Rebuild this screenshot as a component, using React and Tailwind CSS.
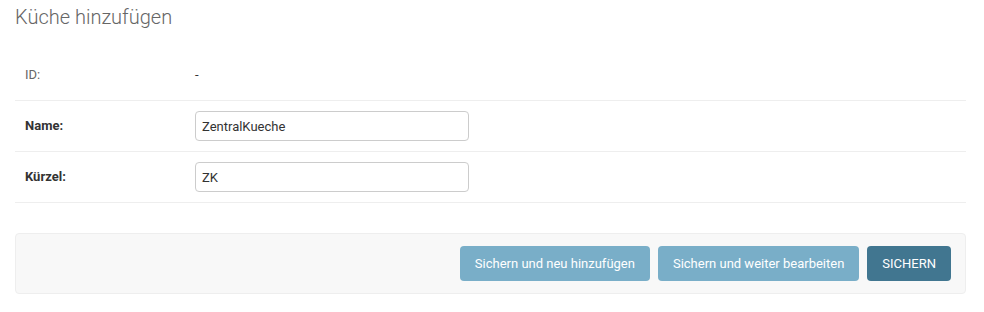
import React, { useState } from 'react';

const Row = ({ label, required, children }) => (
  <div className="flex items-start border-b border-[#eee] p-[10px]">
    <label
      className={`w-[170px] shrink-0 pt-[7px] pr-[10px] text-[13px] leading-[16px] ${
        required ? 'font-bold text-[#333]' : 'text-[#666]'
      }`}
    >
      {label}
    </label>
    {children}
  </div>
);

const App = () => {
  const [name, setName] = useState('ZentralKueche');
  const [kuerzel, setKuerzel] = useState('ZK');

  return (
    <div
      className="min-h-[312px] bg-white pl-[15px] pr-[18px] pt-[5px] text-[#333]"
      style={{ fontFamily: 'Roboto, "Liberation Sans", sans-serif' }}
    >
      <h1 className="mb-[21px] text-[20px] font-light leading-[24px] text-[#666]">Küche hinzufügen</h1>

      <form onSubmit={(e) => e.preventDefault()}>
        <fieldset>
          {/* ID (read only) */}
          <Row label="ID:">
            <div className="h-[30px] pt-[7px] text-[13px] leading-[16px] text-[#333]">-</div>
          </Row>

          <Row label="Name:" required>
            <input
              type="text"
              value={name}
              onChange={(e) => setName(e.target.value)}
              className="h-[30px] w-[274px] rounded-[4px] border border-[#ccc] px-[6px] text-[13px] text-[#333] outline-none"
            />
          </Row>

          <Row label="Kürzel:" required>
            <input
              type="text"
              value={kuerzel}
              onChange={(e) => setKuerzel(e.target.value)}
              className="h-[30px] w-[274px] rounded-[4px] border border-[#ccc] px-[6px] text-[13px] text-[#333] outline-none"
            />
          </Row>
        </fieldset>

        {/* Submit row */}
        <div className="mt-[30px] flex justify-end gap-[8px] rounded-[4px] border border-[#eee] bg-[#f8f8f8] px-[14px] py-[12px]">
          <button
            type="submit"
            className="h-[35px] rounded-[4px] bg-[#79aec8] px-[15px] text-[13px] text-white"
          >
            Sichern und neu hinzufügen
          </button>
          <button
            type="submit"
            className="h-[35px] rounded-[4px] bg-[#79aec8] px-[15px] text-[13px] text-white"
          >
            Sichern und weiter bearbeiten
          </button>
          <button
            type="submit"
            className="h-[35px] rounded-[4px] bg-[#417690] px-[15px] text-[13px] uppercase text-white"
          >
            Sichern
          </button>
        </div>
      </form>
    </div>
  );
};

export default App;
